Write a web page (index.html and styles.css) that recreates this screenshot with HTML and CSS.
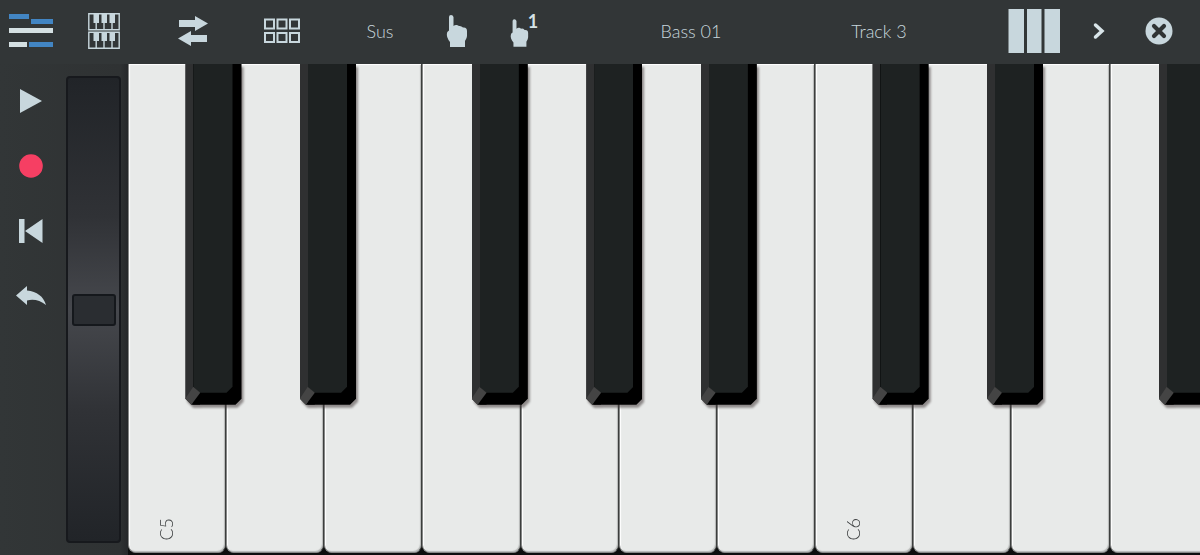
FILE: index.html
```html
<!DOCTYPE html>
<html lang="en">
<head>
<meta charset="utf-8">
<title>Keyboard</title>
<link rel="stylesheet" href="styles.css">
</head>
<body>
<div class="app">
  <header class="toolbar">
    <button class="tool" aria-label="Menu"><svg width="44" height="34" viewBox="0 0 44 34"><path fill="#4285c3" d="M0 0h20v5H0zM22 5h22v5H22zM20 28h24v5H20z"/><path fill="#d5e0e2" d="M0 14h44v5H0zM0 28h18v5H0z"/></svg></button>
    <button class="tool" aria-label="Keyboard layout"><svg width="32" height="36" viewBox="0 0 32 36"><g fill="none" stroke="#c8d7dd" stroke-width="1.4"><path d="M.8.8h30.4v16H.8zM.8 19.2h30.4v16H.8z"/><path d="M8.2 10v7M16 10v7M24 10v7M8.2 28v7M16 28v7M24 28v7"/></g><path fill="#c8d7dd" d="M5.500 1H11v9H5.500zM13.500 1H19v9h-5.500zM21.500 1H27v9h-5.500zM5.500 19H11v9H5.500zM13.500 19H19v9h-5.500zM21.500 19H27v9h-5.500z"/></svg></button>
    <button class="tool" aria-label="Swap"><svg width="30" height="30" viewBox="0 0 30 30"><path fill="#c8d7dd" d="M1 4h16V0l13 7.500L17 15v-4H1zM29 19H13v-4L0 22.500 13 30v-4h16z"/></svg></button>
    <button class="tool" aria-label="Pads"><svg width="38" height="26" viewBox="0 0 38 26"><path fill="none" stroke="#c8d7dd" stroke-width="2" d="M2 1.500h9v9H2zM14.500 1.500h9v9h-9zM27 1.500h9v9h-9zM2 15h9v9H2zM14.500 15h9v9h-9zM27 15h9v9h-9z"/></svg></button>
    <button class="tool">Sus</button>
    <button class="tool" aria-label="Touch"><svg width="22" height="32" viewBox="0 0 22 32"><path fill="#c8d7dd" d="M3 2Q3 0 5 0T7.500 2V11Q9 9.500 11 10L13 11Q15 10.500 17 12.500Q21 12 21 16V21Q21 23 19 26V32H4V27Q0 22 1 18Q1 16.500 3 15.500z"/></svg></button>
    <button class="tool finger" aria-label="Touch 1"><svg width="19" height="28" viewBox="0 0 22 32"><path fill="#c8d7dd" d="M3 2Q3 0 5 0T7.500 2V11Q9 9.500 11 10L13 11Q15 10.500 17 12.500Q21 12 21 16V21Q21 23 19 26V32H4V27Q0 22 1 18Q1 16.500 3 15.500z"/></svg><svg class="count" width="7" height="24" viewBox="0 0 7 24"><text x="3" y="18" text-anchor="middle" class="digit">1</text></svg></button>
    <button class="tool">Bass 01</button>
    <button class="tool">Track 3</button>
    <button class="tool bars" aria-label="Key width"><svg width="52" height="44" viewBox="0 0 52 44"><path fill="#c8d7dd" d="M.5 0H16v44H.5zM19 0h14.500v44H19zM36.500 0H52v44H36.500z"/></svg></button>
    <button class="tool" aria-label="Next"><svg width="12" height="18" viewBox="0 0 12 18"><path fill="none" stroke="#d9e5e9" stroke-width="3.500" stroke-linecap="round" d="M2.500 3 9 9l-6.500 6"/></svg></button>
    <button class="tool" aria-label="Close"><svg width="28" height="28" viewBox="0 0 28 28"><circle cx="14" cy="14" r="13.500" fill="#c8d7dd"/><path stroke="#2f3334" stroke-width="4.200" stroke-linecap="round" d="m9 9 10 10M19 9 9 19"/></svg></button>
  </header>
  <main class="stage">
    <nav class="rail">
      <button class="tool" aria-label="Play"><svg width="22" height="24" viewBox="0 0 22 24"><path fill="#c8d7dd" d="M0 0 22 12 0 24z"/></svg></button>
      <button class="tool" aria-label="Record"><svg width="24" height="24" viewBox="0 0 24 24"><circle cx="12" cy="12" r="11.800" fill="#f63f63"/></svg></button>
      <button class="tool" aria-label="Rewind"><svg width="24" height="24" viewBox="0 0 24 24"><path fill="#c8d7dd" d="M0 0h5.500v24H0zM23.500 0v24L6 12z"/></svg></button>
      <button class="tool" aria-label="Undo"><svg width="30" height="20" viewBox="0 0 30 20"><path fill="#c8d7dd" d="M0 9.500 11 0v4.500Q26 6 30 19 21 12 11 14.500V19z"/></svg></button>
    </nav>
    <input class="wheel" type="range" min="0" max="100" value="50" aria-label="Pitch wheel">
    <section class="keyboard" aria-label="Keys">
      <div class="keys">
        <div class="whites">
          <button class="white"><span class="note">C5</span></button>
          <button class="white" aria-label="D5"></button>
          <button class="white" aria-label="E5"></button>
          <button class="white" aria-label="F5"></button>
          <button class="white" aria-label="G5"></button>
          <button class="white" aria-label="A5"></button>
          <button class="white" aria-label="B5"></button>
          <button class="white"><span class="note">C6</span></button>
          <button class="white" aria-label="D6"></button>
          <button class="white" aria-label="E6"></button>
          <button class="white" aria-label="F6"></button>
        </div>
        <div class="blacks">
          <button class="black n2" aria-label="C sharp 5"><span class="body"><span class="face"></span></span></button>
          <button class="black n4" aria-label="D sharp 5"><span class="body"><span class="face"></span></span></button>
          <button class="black n7" aria-label="F sharp 5"><span class="body"><span class="face"></span></span></button>
          <button class="black n9" aria-label="G sharp 5"><span class="body"><span class="face"></span></span></button>
          <button class="black n11" aria-label="A sharp 5"><span class="body"><span class="face"></span></span></button>
          <button class="black n14" aria-label="C sharp 6"><span class="body"><span class="face"></span></span></button>
          <button class="black n16" aria-label="D sharp 6"><span class="body"><span class="face"></span></span></button>
          <button class="black n19" aria-label="F sharp 6"><span class="body"><span class="face"></span></span></button>
        </div>
      </div>
    </section>
  </main>
</div>
</body>
</html>
```
FILE: styles.css
```css
* { box-sizing: border-box; }
body { margin: 0; background: #2f3334; font-family: Lato, "Open Sans", sans-serif; }
button { margin: 0; padding: 0; border: 0; background: none; font: inherit; color: inherit; cursor: pointer; }
svg { display: block; flex: none; }

.app { display: flex; flex-direction: column; height: 100vh; min-height: 400px; }

.toolbar {
  display: grid;
  /* the last column is the right margin; the tenth is a gap before the bars */
  grid-template-columns: 62fr 84fr 94fr 84fr 112fr 42fr 90fr 246fr 130fr 52fr 76fr 54fr 66fr 8fr;
  height: 64px;
  padding-bottom: 2px;
  background: #323637;
  color: #c8d7dd;
  font-size: 18px;
  font-weight: 300;
  line-height: 24px;
}
.tool { display: flex; align-items: center; justify-content: center; min-width: 0; white-space: nowrap; }
.bars { grid-column: 11; }
.finger { gap: 1px; }
.finger svg { margin-top: 4px; }
.finger .count { align-self: flex-start; margin-top: 10px; overflow: visible; }
.digit { fill: #d5e2e6; font-size: 18px; font-weight: 700; }

.stage { display: flex; flex: 1; min-height: 0; background: linear-gradient(90deg, #323637, #2f3233 120px, #26282a 128px); }
.rail { display: grid; grid-auto-rows: 65px; align-content: start; width: 61px; padding-top: 4px; }

.wheel {
  appearance: none;
  writing-mode: vertical-lr;
  flex: none;
  width: 55px;
  height: auto;
  margin: 12px 7px 12px 5px;
  border: 2px solid #17191d;
  border-radius: 4px;
  background: linear-gradient(#212428, #303236 30%, #46484d 50%, #303236 72%, #212428);
}
.wheel::-webkit-slider-thumb {
  appearance: none;
  width: 44px;
  height: 32px;
  border: 2px solid #15181c;
  border-radius: 3px;
  background: #2a2d31;
}

.keyboard { flex: 1; min-width: 0; overflow: hidden; background: #0d0e0e; }
/* two octaves, of which the window shows about eleven white keys */
.keys { position: relative; width: 128.2%; height: 100%; }
.whites { display: grid; grid-template-columns: repeat(14, 1fr); height: 100%; padding-bottom: 2px; }
.white {
  display: flex;
  align-items: flex-end;
  padding: 0 0 11px 27px;
  border: solid #858786;
  border-width: 0 1px 1px 1px;
  border-right-color: #3c3e3d;
  border-radius: 0 0 8px 8px;
  background: #e8eae9;
  box-shadow: inset 1px 1px 1px #fff, inset -1px -1px 1px #b5b7b6;
}
.note { writing-mode: vertical-rl; transform: rotate(180deg); color: #3b3e3f; font-size: 18px; font-weight: 300; line-height: 20px; }

.blacks {
  position: absolute;
  inset: 0 0 auto 0;
  display: grid;
  grid-template-columns: repeat(24, 1fr);
  height: 69.4%;
  pointer-events: none;
}
.black { grid-row: 1; padding-right: 1px; pointer-events: auto; filter: drop-shadow(2px 3px 1px rgba(70, 60, 60, .55)); }
.n2 { grid-column: 2; }
.n4 { grid-column: 4; }
.n7 { grid-column: 7; }
.n9 { grid-column: 9; }
.n11 { grid-column: 11; }
.n14 { grid-column: 14; }
.n16 { grid-column: 16; }
.n19 { grid-column: 19; }
.body {
  display: block;
  position: relative;
  height: 100%;
  padding: 0 9px 12px 8px;
  background: linear-gradient(90deg, #2f3031 8px, #000 8px);
  clip-path: polygon(0 0, 100% 0, 100% calc(100% - 6px), calc(100% - 6px) 100%, 6px 100%, 0 calc(100% - 6px));
}
.body::before,
.body::after {
  content: "";
  position: absolute;
  left: 0;
  bottom: 0;
  width: 15px;
  height: 18px;
}
.body::before { background: #000; clip-path: polygon(15px 6px, 100% 100%, 6px 100%); }
.body::after { background: #444; clip-path: polygon(0 12px, 8px 0, 15px 6px, 6px 100%); }
.face {
  display: block;
  height: 100%;
  background: #1e2222;
  clip-path: polygon(0 0, 100% 0, 100% calc(100% - 6px), calc(100% - 6px) 100%, 6px 100%, 0 calc(100% - 6px));
}
```
